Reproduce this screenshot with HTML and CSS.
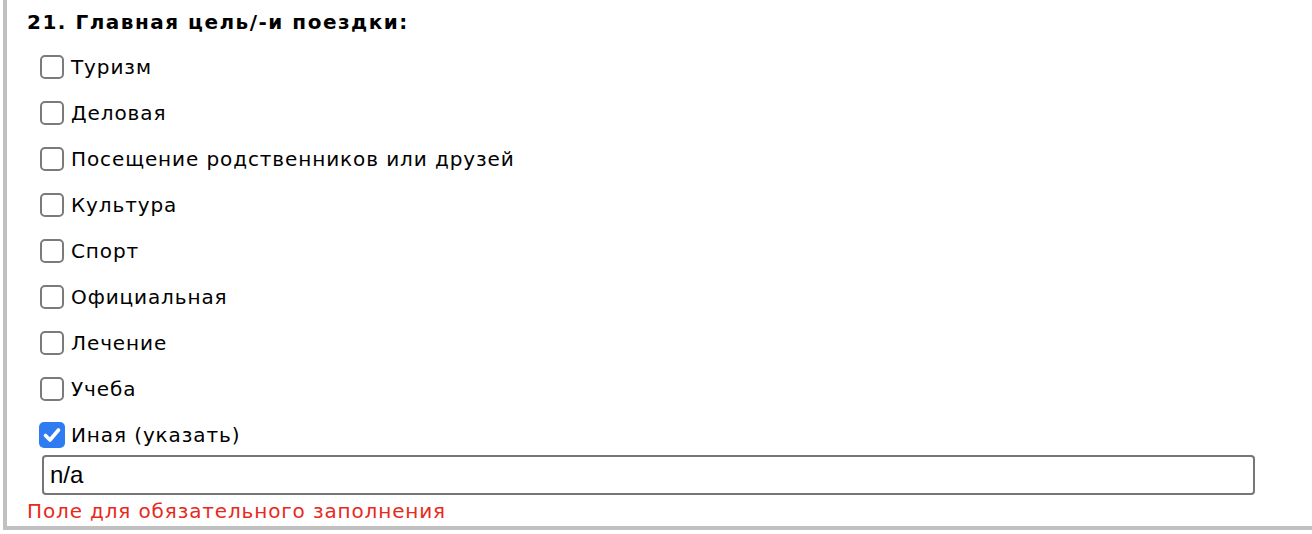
FILE: index.html
```html
<html>
	<head>
		<title>Анкета</title>
		<link rel="stylesheet" href="styles.css">
	</head>
	<body>
		<div class="panel">
			<div class="question">21. Главная цель/-и поездки:</div>
			<div class="options">
				<label class="option"><input type="checkbox"><span class="box"></span>Туризм</label>
				<label class="option"><input type="checkbox"><span class="box"></span>Деловая</label>
				<label class="option"><input type="checkbox"><span class="box"></span>Посещение родственников или друзей</label>
				<label class="option"><input type="checkbox"><span class="box"></span>Культура</label>
				<label class="option"><input type="checkbox"><span class="box"></span>Спорт</label>
				<label class="option"><input type="checkbox"><span class="box"></span>Официальная</label>
				<label class="option"><input type="checkbox"><span class="box"></span>Лечение</label>
				<label class="option"><input type="checkbox"><span class="box"></span>Учеба</label>
				<label class="option"><input type="checkbox" checked><span class="box checked"><svg viewBox="0 0 26 26" width="26" height="26"><path d="M6.5 13.5 L11 18 L19.5 8" fill="none" stroke="#fff" stroke-width="3.6" stroke-linecap="round" stroke-linejoin="round"/></svg></span>Иная (указать)</label>
			</div>
			<div class="other">
				<input class="other-input" type="text" value="n/a">
			</div>
			<div class="error">Поле для обязательного заполнения</div>
		</div>
	</body>
</html>
```

FILE: styles.css
```css
body
{
	margin: 0;
	background-color: #fff;
	overflow: hidden;
	font-family: "DejaVu Sans", Verdana, sans-serif;
	color: #000;
}

.panel
{
	margin-left: 3px;
	margin-right: -20px;
	height: 530px;
	box-sizing: border-box;
	border-left: 4px solid #c0c0c0;
	border-bottom: 4px solid #c0c0c0;
}

.question
{
	height: 44px;
	line-height: 44px;
	padding-left: 20px;
	font-size: 20px;
	font-weight: bold;
	letter-spacing: 1.5px;
}

.options
{
	padding-left: 32px;
}

.option
{
	display: flex;
	align-items: center;
	height: 46px;
	font-size: 20px;
	letter-spacing: 0.9px;
}

.option input
{
	display: none;
}

.box
{
	width: 24px;
	height: 24px;
	margin: 0 7px 0 1px;
	box-sizing: border-box;
	border: 2px solid #7b7b7b;
	border-radius: 5px;
	background-color: #fff;
}

.box.checked
{
	width: 26px;
	height: 26px;
	margin: 0 6px 0 0;
	border: 0;
	background-color: #2f7cf2;
}

.box svg
{
	display: block;
}

.other
{
	margin-top: -3px;
	padding-left: 35px;
}

.other-input
{
	width: 1213px;
	height: 40px;
	box-sizing: border-box;
	border: 2px solid #767676;
	border-radius: 4px;
	padding: 0 6px;
	font-family: "Liberation Sans", Arial, sans-serif;
	font-size: 24px;
	color: #000;
	outline: none;
}

.error
{
	padding-left: 20px;
	margin-top: 4px;
	font-size: 20px;
	letter-spacing: 0.86px;
	color: #e8291c;
}
```
